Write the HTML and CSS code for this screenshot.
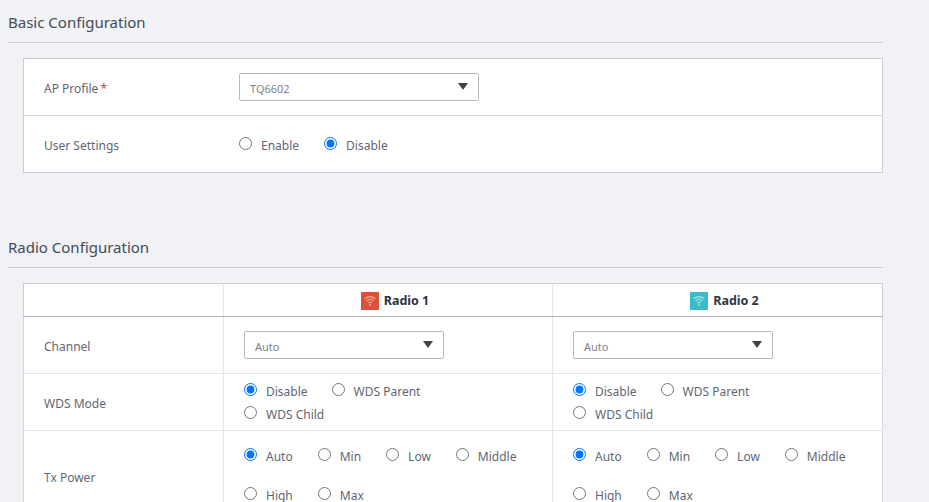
FILE: index.html
```html
<!DOCTYPE html>
<html lang="en-US">
<head>
<meta charset="utf-8">
<title>AP Configuration</title>
<link rel="stylesheet" href="styles.css">
</head>
<body>

<div class="page">

  <h2 class="section-title">Basic Configuration</h2>
  <div class="card">
    <div class="form-row">
      <div class="form-label">AP Profile<span class="required">*</span></div>
      <div class="select">
        <span>TQ6602</span>
        <span class="caret"></span>
      </div>
    </div>
    <div class="form-row">
      <div class="form-label">User Settings</div>
      <div class="radio-group">
        <label class="radio"><input type="radio" name="user"><span>Enable</span></label>
        <label class="radio"><input type="radio" name="user" checked><span>Disable</span></label>
      </div>
    </div>
  </div>

  <h2 class="section-title second">Radio Configuration</h2>
  <table class="radio-table">
    <tr>
      <th class="col-label"></th>
      <th class="col-radio">
        <span class="radio-name">
          <svg class="wifi red" viewBox="0 0 18 18" width="18" height="18">
            <path d="M3.8 6.8a7.8 7.8 0 0 1 10.4 0M5.6 8.9a5 5 0 0 1 6.8 0M7.4 10.9a2.4 2.4 0 0 1 3.2 0" />
            <circle cx="9" cy="12.7" r="1" />
          </svg>
          Radio 1
        </span>
      </th>
      <th class="col-radio">
        <span class="radio-name">
          <svg class="wifi teal" viewBox="0 0 18 18" width="18" height="18">
            <path d="M3.8 6.8a7.8 7.8 0 0 1 10.4 0M5.6 8.9a5 5 0 0 1 6.8 0M7.4 10.9a2.4 2.4 0 0 1 3.2 0" />
            <circle cx="9" cy="12.7" r="1" />
          </svg>
          Radio 2
        </span>
      </th>
    </tr>
    <tr class="row-channel">
      <td class="row-label">Channel</td>
      <td><div class="select"><span>Auto</span><span class="caret"></span></div></td>
      <td><div class="select"><span>Auto</span><span class="caret"></span></div></td>
    </tr>
    <tr class="row-wds">
      <td class="row-label">WDS Mode</td>
      <td>
        <div class="radio-wrap wds">
          <label class="radio"><input type="radio" name="wds1" checked><span>Disable</span></label>
          <label class="radio"><input type="radio" name="wds1"><span>WDS Parent</span></label>
          <label class="radio"><input type="radio" name="wds1"><span>WDS Child</span></label>
        </div>
      </td>
      <td>
        <div class="radio-wrap wds">
          <label class="radio"><input type="radio" name="wds2" checked><span>Disable</span></label>
          <label class="radio"><input type="radio" name="wds2"><span>WDS Parent</span></label>
          <label class="radio"><input type="radio" name="wds2"><span>WDS Child</span></label>
        </div>
      </td>
    </tr>
    <tr class="row-power">
      <td class="row-label">Tx Power</td>
      <td>
        <div class="radio-wrap power">
          <label class="radio"><input type="radio" name="tx1" checked><span>Auto</span></label>
          <label class="radio"><input type="radio" name="tx1"><span>Min</span></label>
          <label class="radio"><input type="radio" name="tx1"><span>Low</span></label>
          <label class="radio"><input type="radio" name="tx1"><span>Middle</span></label>
          <label class="radio"><input type="radio" name="tx1"><span>High</span></label>
          <label class="radio"><input type="radio" name="tx1"><span>Max</span></label>
        </div>
      </td>
      <td>
        <div class="radio-wrap power">
          <label class="radio"><input type="radio" name="tx2" checked><span>Auto</span></label>
          <label class="radio"><input type="radio" name="tx2"><span>Min</span></label>
          <label class="radio"><input type="radio" name="tx2"><span>Low</span></label>
          <label class="radio"><input type="radio" name="tx2"><span>Middle</span></label>
          <label class="radio"><input type="radio" name="tx2"><span>High</span></label>
          <label class="radio"><input type="radio" name="tx2"><span>Max</span></label>
        </div>
      </td>
    </tr>
  </table>

</div>

</body>
</html>
```

FILE: styles.css
```css
html, body {
    margin: 0;
    height: 100%;
    overflow: hidden;
}
body {
    font-family: "Noto Sans", "Open Sans", Arial, sans-serif;
    font-size: 12px;
    color: #5f6672;
    background-color: #f0f2f6;
}
.page {
    width: 875px;
    padding: 0 0 0 8px;
}
.section-title {
    margin: 0 0 15px 0;
    height: 42px;
    line-height: 45px;
    font-size: 15px;
    font-weight: normal;
    color: #444b57;
    border-bottom: 1px solid #c9ccd2;
}
.section-title.second {
    margin-top: 50px;
    height: 44px;
    line-height: 48px;
}
.card {
    margin-left: 15px;
    background-color: #ffffff;
    border: 1px solid #c9ccd2;
}
.form-row {
    display: flex;
    align-items: center;
    height: 56px;
    padding-left: 20px;
}
.form-row + .form-row {
    border-top: 1px solid #d6d8dc;
}
.form-label {
    width: 195px;
    padding-top: 2px;
}
.required {
    color: #d9412c;
    margin-left: 2px;
}
.select {
    display: flex;
    align-items: center;
    justify-content: space-between;
    box-sizing: border-box;
    width: 240px;
    height: 28px;
    padding: 2px 10px 0 10px;
    background-color: #ffffff;
    border: 1px solid #b5b8bd;
    border-radius: 2px;
    font-size: 11px;
    color: #7b818b;
}
.caret {
    width: 0;
    height: 0;
    margin-top: -4px;
    border-left: 5.5px solid transparent;
    border-right: 5.5px solid transparent;
    border-top: 7px solid #3f444c;
}
.radio-group {
    display: flex;
    gap: 25px;
}
.radio {
    display: inline-flex;
    align-items: center;
    white-space: nowrap;
}
.radio span {
    padding-top: 2px;
}
.radio input {
    width: 13px;
    height: 13px;
    margin: -2px 9px 0 0;
}
.radio-table {
    margin-left: 15px;
    width: 860px;
    table-layout: fixed;
    border-collapse: collapse;
    background-color: #ffffff;
}
.radio-table td, .radio-table th {
    box-sizing: border-box;
    padding: 0;
    border: 1px solid #e2e5e9;
}
.radio-table th {
    height: 33px;
    padding-top: 5px;
    font-size: 12.5px;
    font-weight: bold;
    color: #2f3540;
    border-top: 1px solid #c9ccd2;
    border-bottom: 1px solid #adb0b5;
}
.radio-table th:first-child {
    border-left-color: #c9ccd2;
}
.radio-table th:last-child {
    border-right-color: #c9ccd2;
}
.radio-table td:first-child {
    border-left-color: #d6d8dc;
}
.radio-table td:last-child {
    border-right-color: #d6d8dc;
}
.col-label {
    width: 200px;
}
.col-radio:nth-child(2) {
    width: 329px;
}
.radio-table th.col-radio {
    padding-left: 14px;
}
.radio-name {
    display: inline-flex;
    align-items: center;
    gap: 5px;
}
.wifi {
    border-radius: 1px;
}
.wifi path {
    fill: none;
    stroke-width: 1.5;
}
.wifi.red {
    background-color: #dc5137;
}
.wifi.red path {
    stroke: #f4a08d;
}
.wifi.red circle {
    fill: #f4a08d;
}
.wifi.teal {
    background-color: #38bcc8;
}
.wifi.teal path {
    stroke: #9fe0e6;
}
.wifi.teal circle {
    fill: #9fe0e6;
}
.row-label {
    padding-left: 20px !important;
    padding-top: 2px !important;
}
.row-power .row-label {
    padding-top: 0 !important;
}
.radio-table td:not(.row-label) {
    padding-left: 20px;
}
.radio-table .select {
    width: 200px;
}
.row-channel td {
    height: 57px;
}
.row-wds td {
    height: 57px;
}
.row-power td {
    height: 93px;
}
.radio-wrap {
    display: flex;
    flex-wrap: wrap;
}
.wds {
    max-width: 220px;
    row-gap: 4px;
    column-gap: 24px;
}
.wds .radio {
    height: 19px;
}
.power {
    row-gap: 20px;
    column-gap: 25px;
    margin-bottom: 5px;
}
```
